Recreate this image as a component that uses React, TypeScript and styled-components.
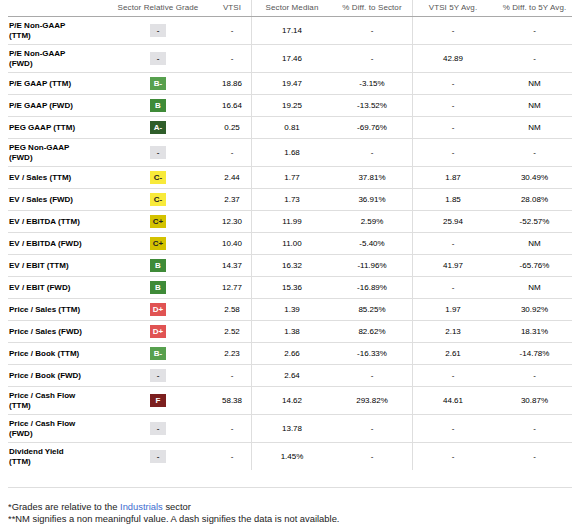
import React from "react";
import styled, { createGlobalStyle } from "styled-components";

const GlobalStyle = createGlobalStyle`
  body {
    margin: 0 8px;
    background: #fff;
    font-family: "Liberation Sans", Arial, sans-serif;
  }
`;

const COLS = "108px 84px 51px 81px 80px 81px 79px";

const Table = styled.div`
  width: 564px;
`;

const HeaderRow = styled.div`
  display: grid;
  grid-template-columns: ${COLS};
  height: 16px;
  border-bottom: 1px solid #a9a9a9;
`;

const Row = styled.div<{ $last?: boolean }>`
  display: grid;
  grid-template-columns: ${COLS};
  align-items: stretch;
  border-bottom: ${(p) => (p.$last ? "none" : "1px solid #dedede")};
`;

const Cell = styled.div<{ $divider?: boolean; $shift?: number }>`
  display: flex;
  align-items: center;
  justify-content: center;
  padding: 4px 0 4px ${(p) => p.$shift || 0}px;
  border-left: ${(p) => (p.$divider ? "1px solid #dedede" : "none")};
  font-size: 8px;
  line-height: 9.5px;
  color: #000;
`;

const HeadCell = styled(Cell)`
  padding-top: 0;
  padding-bottom: 0;
  color: #555;
  letter-spacing: 0.1px;
`;

const Label = styled.div`
  display: flex;
  align-items: center;
  padding: 4px 31px 4px 1px;
  font-size: 8px;
  line-height: 9.5px;
  font-weight: bold;
  color: #000;
`;

const gradeColors: Record<string, [string, string]> = {
  "-": ["#e1e1e4", "#333"],
  "A-": ["#2f5e2a", "#fff"],
  B: ["#3f8b38", "#fff"],
  "B-": ["#57a04e", "#fff"],
  "C+": ["#d4c200", "#222"],
  "C-": ["#f8ea3a", "#222"],
  "D+": ["#e05353", "#fff"],
  F: ["#7c1f1f", "#fff"],
};

const Badge = styled.div<{ $bg: string; $fg: string }>`
  width: 16px;
  height: 13px;
  display: flex;
  align-items: center;
  justify-content: center;
  background: ${(p) => p.$bg};
  color: ${(p) => p.$fg};
  font-size: 8px;
  font-weight: bold;
`;

const Rule = styled.div`
  width: 564px;
  height: 1px;
  background: #dedede;
  margin-top: 17px;
`;

const Footer = styled.div`
  margin-top: 13px;
  font-size: 9.4px;
  line-height: 12px;
  color: #222;
`;

const Link = styled.span`
  color: #3d6cd0;
`;

type Item = [string, string, string, string, string, string, string];

const rows: Item[] = [
  ["P/E Non-GAAP (TTM)", "-", "-", "17.14", "-", "-", "-"],
  ["P/E Non-GAAP (FWD)", "-", "-", "17.46", "-", "42.89", "-"],
  ["P/E GAAP (TTM)", "B-", "18.86", "19.47", "-3.15%", "-", "NM"],
  ["P/E GAAP (FWD)", "B", "16.64", "19.25", "-13.52%", "-", "NM"],
  ["PEG GAAP (TTM)", "A-", "0.25", "0.81", "-69.76%", "-", "NM"],
  ["PEG Non-GAAP (FWD)", "-", "-", "1.68", "-", "-", "-"],
  ["EV / Sales (TTM)", "C-", "2.44", "1.77", "37.81%", "1.87", "30.49%"],
  ["EV / Sales (FWD)", "C-", "2.37", "1.73", "36.91%", "1.85", "28.08%"],
  ["EV / EBITDA (TTM)", "C+", "12.30", "11.99", "2.59%", "25.94", "-52.57%"],
  ["EV / EBITDA (FWD)", "C+", "10.40", "11.00", "-5.40%", "-", "NM"],
  ["EV / EBIT (TTM)", "B", "14.37", "16.32", "-11.96%", "41.97", "-65.76%"],
  ["EV / EBIT (FWD)", "B", "12.77", "15.36", "-16.89%", "-", "NM"],
  ["Price / Sales (TTM)", "D+", "2.58", "1.39", "85.25%", "1.97", "30.92%"],
  ["Price / Sales (FWD)", "D+", "2.52", "1.38", "82.62%", "2.13", "18.31%"],
  ["Price / Book (TTM)", "B-", "2.23", "2.66", "-16.33%", "2.61", "-14.78%"],
  ["Price / Book (FWD)", "-", "-", "2.64", "-", "-", "-"],
  ["Price / Cash Flow (TTM)", "F", "58.38", "14.62", "293.82%", "44.61", "30.87%"],
  ["Price / Cash Flow (FWD)", "-", "-", "13.78", "-", "-", "-"],
  ["Dividend Yield (TTM)", "-", "-", "1.45%", "-", "-", "-"],
];

const App = () => (
  <>
    <GlobalStyle />
    <Table>
      <HeaderRow>
        <HeadCell />
        <HeadCell>Sector Relative Grade</HeadCell>
        <HeadCell $shift={13}>VTSI</HeadCell>
        <HeadCell $divider>Sector Median</HeadCell>
        <HeadCell>% Diff. to Sector</HeadCell>
        <HeadCell $divider>VTSI 5Y Avg.</HeadCell>
        <HeadCell $shift={4}>% Diff. to 5Y Avg.</HeadCell>
      </HeaderRow>
      {rows.map((r, i) => {
        const [bg, fg] = gradeColors[r[1]];
        return (
          <Row key={r[0]} $last={i === rows.length - 1}>
            <Label>{r[0]}</Label>
            <Cell>
              <Badge $bg={bg} $fg={fg}>{r[1]}</Badge>
            </Cell>
            <Cell $shift={13}>{r[2]}</Cell>
            <Cell $divider>{r[3]}</Cell>
            <Cell>{r[4]}</Cell>
            <Cell $divider>{r[5]}</Cell>
            <Cell $shift={4}>{r[6]}</Cell>
          </Row>
        );
      })}
    </Table>
    <Rule />
    <Footer>
      <div>
        *Grades are relative to the <Link>Industrials</Link> sector
      </div>
      <div>**NM signifies a non meaningful value. A dash signifies the data is not available.</div>
    </Footer>
  </>
);

export default App;
